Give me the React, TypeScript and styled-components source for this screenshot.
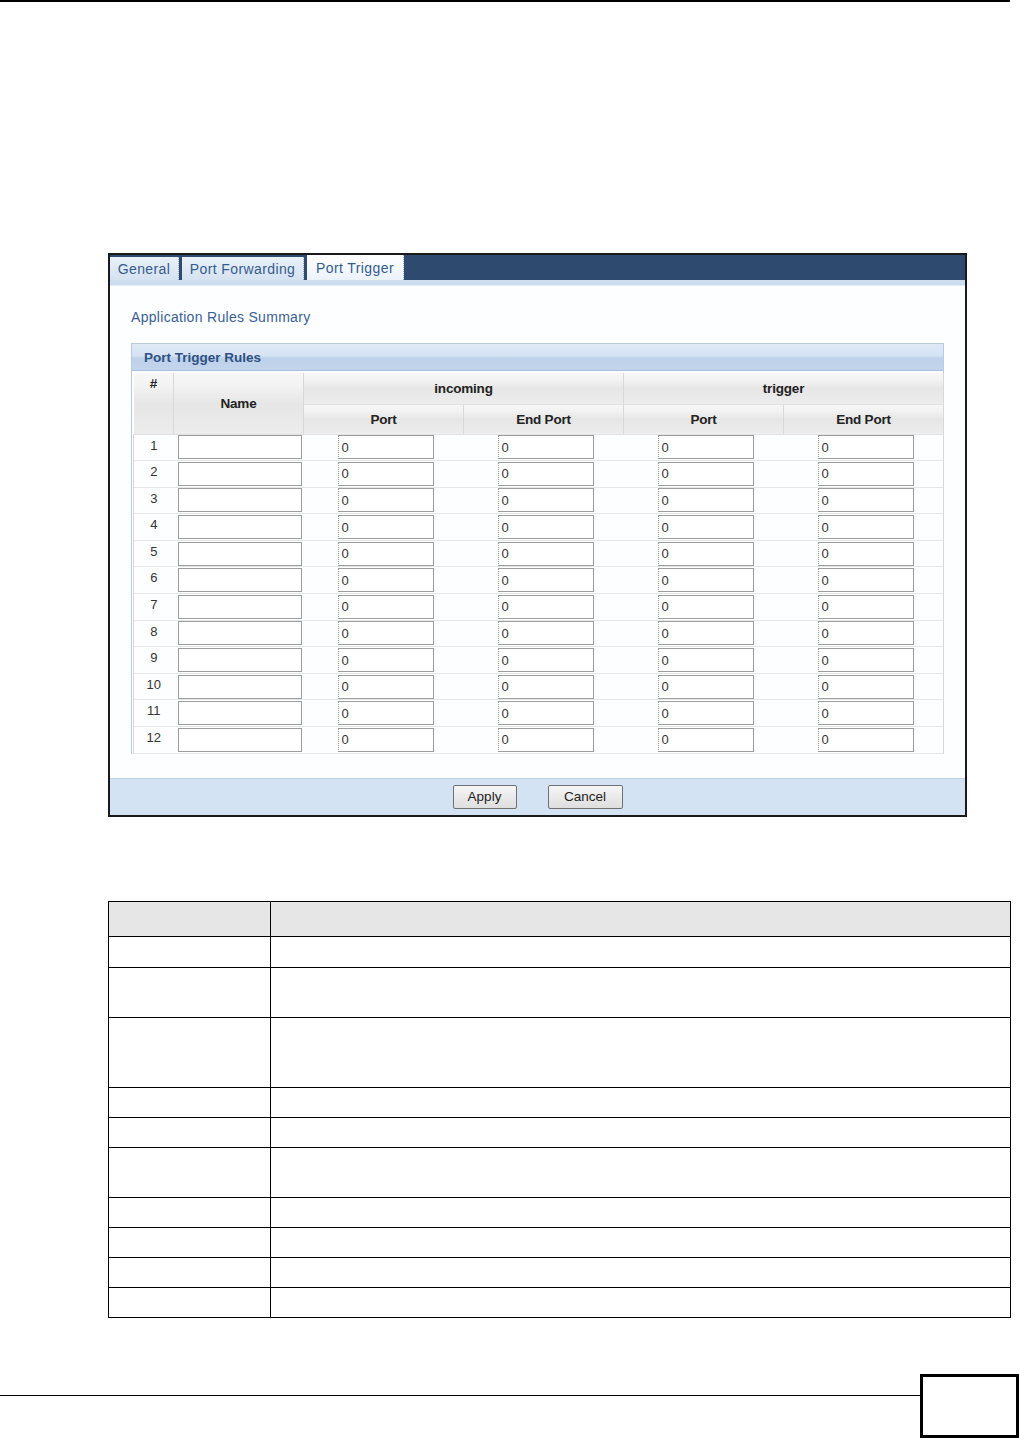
import React, { FC } from 'react';
import styled, { createGlobalStyle } from 'styled-components';

const GlobalStyle = createGlobalStyle`
  html, body {
    margin: 0;
    padding: 0;
    background: #ffffff;
  }
  body {
    font-family: 'Liberation Sans', Arial, sans-serif;
  }
`;

const Page = styled.div`
  width: 1020px;
  height: 1438px;
  display: flex;
  flex-direction: column;
  overflow: hidden;
`;

const TopRule = styled.div`
  width: 1010px;
  height: 2px;
  background: #000;
  flex: none;
`;

const Panel = styled.div`
  margin: 251px 0 0 108px;
  width: 855px;
  border: 2px solid #1a1a1a;
  background: #fdfeff;
  display: flex;
  flex-direction: column;
`;

const TabBar = styled.div`
  height: 25px;
  background: #2f4a6f;
  display: flex;
  align-items: stretch;
  gap: 3px;
`;

const Tab = styled.div<{ $w: number; $active?: boolean }>`
  width: ${({ $w }) => $w}px;
  box-sizing: border-box;
  display: flex;
  align-items: center;
  justify-content: center;
  font-size: 14px;
  letter-spacing: 0.4px;
  color: #355c8f;
  background: ${({ $active }) =>
    $active ? 'linear-gradient(#ffffff, #eaf2fb)' : 'linear-gradient(#e9f0f8, #d5e2f1)'};
  border-right: 1px dotted #9ab0cc;
  margin-top: ${({ $active }) => ($active ? '0' : '2px')};
`;

const Strip = styled.div`
  height: 5px;
  background: #cddcee;
  border-bottom: 1px solid #e4ecf6;
`;

const Content = styled.div`
  padding: 23px 21px 0 21px;
  display: flex;
  flex-direction: column;
`;

const SummaryTitle = styled.div`
  font-size: 14px;
  line-height: 16px;
  letter-spacing: 0.3px;
  color: #3a5f94;
`;

const RulesBox = styled.div`
  margin-top: 18px;
  border: 1px solid #b7cbe3;
  border-bottom: none;
`;

const RulesHeader = styled.div`
  height: 26px;
  display: flex;
  align-items: center;
  padding-left: 12px;
  font-size: 13.5px;
  font-weight: bold;
  color: #2f5185;
  background: linear-gradient(#dfe9f6 0%, #d6e3f3 45%, #bdd1ea 55%, #c3d5ec 100%);
  border-bottom: 1px solid #a9c0de;
`;

const Grid = styled.table`
  border-collapse: collapse;
  margin: 2px 1px 0 1px;
  width: 810px;
  table-layout: fixed;
  font-size: 13px;
  color: #222;
`;

const HeadCell = styled.th<{ $top?: boolean }>`
  font-weight: bold;
  font-size: 13.5px;
  letter-spacing: -0.2px;
  color: #222;
  text-align: center;
  vertical-align: ${({ $top }) => ($top ? 'top' : 'middle')};
  padding: ${({ $top }) => ($top ? '3px 0 0' : '0')};
  background: linear-gradient(#f7f7f7 0%, #f3f3f3 20%, #e6e6e6 50%, #ececec 100%);
  border-left: 1px solid #ffffff;
  border-right: 1px solid #d8d8d8;
  border-bottom: 1px solid #e0e0e0;
`;

const Row = styled.tr`
  height: 26.6px;
  border-bottom: 1px solid #e6e6e6;
`;

const NumCell = styled.td`
  text-align: center;
  vertical-align: top;
  padding-top: 3px;
  font-size: 13px;
  color: #333;
  border-left: 1px solid #d9d9d9;
`;

const FieldCell = styled.td<{ $pad: number; $last?: boolean }>`
  padding: 0 0 0 ${({ $pad }) => $pad}px;
  vertical-align: middle;
  border-right: ${({ $last }) => ($last ? '1px solid #d9d9d9' : 'none')};
`;

const TextBox = styled.div<{ $w: number }>`
  width: ${({ $w }) => $w}px;
  height: 24px;
  box-sizing: border-box;
  border: 1px solid #9d9d9d;
  border-left-style: ${({ $w }) => ($w < 120 ? 'dotted' : 'solid')};
  background: #fff;
  font-size: 13px;
  color: #333;
  display: flex;
  align-items: center;
  padding-left: 3px;
`;

const ButtonBar = styled.div`
  margin-top: 24px;
  height: 36px;
  background: #d4e3f3;
  border-top: 1px solid #bfd1e8;
  display: flex;
  justify-content: center;
  align-items: center;
  gap: 31px;
`;

const Button = styled.div<{ $w: number }>`
  width: ${({ $w }) => $w}px;
  height: 24px;
  box-sizing: border-box;
  border: 1px solid #707070;
  border-radius: 2px;
  background: linear-gradient(#f6f6f6, #dedede);
  font-size: 13.5px;
  color: #222;
  display: flex;
  align-items: center;
  justify-content: center;
`;

const DocTable = styled.table`
  margin: 84px 0 0 108px;
  width: 902px;
  border-collapse: collapse;
  table-layout: fixed;
`;

const DocRow = styled.tr<{ $h: number; $head?: boolean }>`
  height: ${({ $h }) => $h}px;
  background: ${({ $head }) => ($head ? '#e6e6e6' : '#fff')};
`;

const DocCell = styled.td`
  border: 1px solid #000;
  padding: 0;
`;

const Footer = styled.div`
  margin-top: 56px;
  display: flex;
  align-items: flex-start;
`;

const FooterRule = styled.div`
  width: 920px;
  height: 1px;
  background: #000;
  margin-top: 21px;
`;

const PageBox = styled.div`
  width: 99px;
  height: 64px;
  box-sizing: border-box;
  border: 3px solid #000;
`;

const rows = Array.from({ length: 12 }, (_, i) => i + 1);
const docHeights = [31, 50, 70, 30, 30, 50, 30, 30, 30, 30];

const App: FC = () => (
  <Page>
    <GlobalStyle />
    <TopRule />
    <Panel>
      <TabBar>
        <Tab $w={69}>General</Tab>
        <Tab $w={122}>Port Forwarding</Tab>
        <Tab $w={97} $active>Port Trigger</Tab>
      </TabBar>
      <Strip />
      <Content>
        <SummaryTitle>Application Rules Summary</SummaryTitle>
        <RulesBox>
          <RulesHeader>Port Trigger Rules</RulesHeader>
          <Grid>
            <colgroup>
              <col style={{ width: 40 }} />
              <col style={{ width: 130 }} />
              <col style={{ width: 160 }} />
              <col style={{ width: 160 }} />
              <col style={{ width: 160 }} />
              <col style={{ width: 160 }} />
            </colgroup>
            <thead>
              <tr style={{ height: 31 }}>
                <HeadCell rowSpan={2} $top>#</HeadCell>
                <HeadCell rowSpan={2}>Name</HeadCell>
                <HeadCell colSpan={2}>incoming</HeadCell>
                <HeadCell colSpan={2}>trigger</HeadCell>
              </tr>
              <tr style={{ height: 30 }}>
                <HeadCell>Port</HeadCell>
                <HeadCell>End Port</HeadCell>
                <HeadCell>Port</HeadCell>
                <HeadCell>End Port</HeadCell>
              </tr>
            </thead>
            <tbody>
              {rows.map((n) => (
                <Row key={n}>
                  <NumCell>{n}</NumCell>
                  <FieldCell $pad={4}>
                    <TextBox $w={124} />
                  </FieldCell>
                  <FieldCell $pad={34}>
                    <TextBox $w={96}>0</TextBox>
                  </FieldCell>
                  <FieldCell $pad={34}>
                    <TextBox $w={96}>0</TextBox>
                  </FieldCell>
                  <FieldCell $pad={34}>
                    <TextBox $w={96}>0</TextBox>
                  </FieldCell>
                  <FieldCell $pad={34} $last>
                    <TextBox $w={96}>0</TextBox>
                  </FieldCell>
                </Row>
              ))}
            </tbody>
          </Grid>
        </RulesBox>
      </Content>
      <ButtonBar>
        <Button $w={64}>Apply</Button>
        <Button $w={75}>Cancel</Button>
      </ButtonBar>
    </Panel>
    <DocTable>
      <colgroup>
        <col style={{ width: 162 }} />
        <col style={{ width: 740 }} />
      </colgroup>
      <tbody>
        <DocRow $h={35} $head>
          <DocCell />
          <DocCell />
        </DocRow>
        {docHeights.map((h, i) => (
          <DocRow key={i} $h={h}>
            <DocCell />
            <DocCell />
          </DocRow>
        ))}
      </tbody>
    </DocTable>
    <Footer>
      <FooterRule />
      <PageBox />
    </Footer>
  </Page>
);

export default App;
